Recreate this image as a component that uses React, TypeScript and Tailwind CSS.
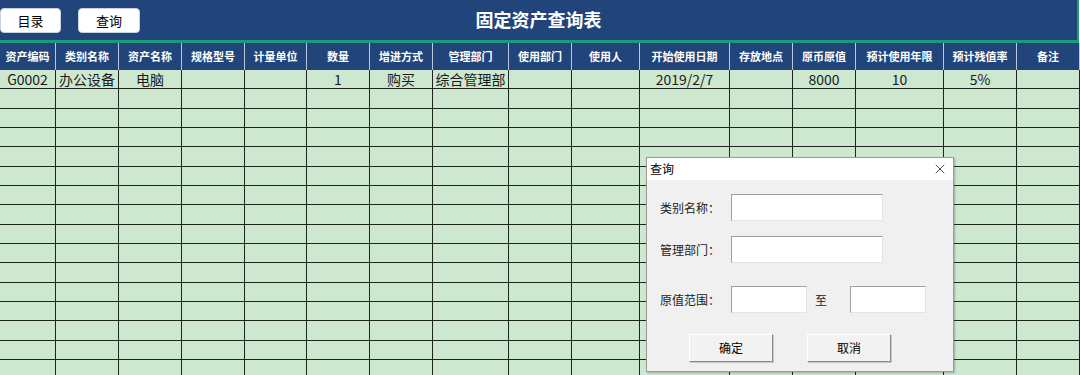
import { X } from "lucide-react";

const columns = [
  "资产编码", "类别名称", "资产名称", "规格型号", "计量单位", "数量", "增进方式", "管理部门",
  "使用部门", "使用人", "开始使用日期", "存放地点", "原币原值", "预计使用年限", "预计残值率", "备注",
];

const firstRow = ["G0002", "办公设备", "电脑", "", "", "1", "购买", "综合管理部", "", "", "2019/2/7", "", "8000", "10", "5%", ""];

const gridCols = "grid grid-cols-[56px_63px_63px_63px_62px_63px_63px_76px_63px_68px_90px_63px_63px_88px_73px_1fr]";

function Field({ label, className = "" }: { label: string; className?: string }) {
  return (
    <div className={`flex flex-row items-center ${className}`}>
      <span className="w-[71px] text-[12px] text-[#222]">{label}</span>
      <div className="w-[152px] h-[27px] bg-white border border-t-[#a0a0a0] border-l-[#a0a0a0] border-r-[#e3e3e3] border-b-[#e3e3e3]" />
    </div>
  );
}

export default function App() {
  const rows = Array.from({ length: 16 }, (_, i) => (i === 0 ? firstRow : columns.map(() => "")));

  return (
    <div className="relative w-[1080px] h-[375px] overflow-hidden bg-white font-['Noto_Sans_CJK_SC','Noto_Sans',sans-serif]">

      {/* Title bar */}
      <div className="w-[1079px] h-[43px] bg-[#21457a] border-b-[3px] border-r-2 border-[#1c9c78] flex flex-row items-center relative">
        <div className="flex flex-row gap-x-[17px] pt-[1px]">
          <button className="w-[61px] h-[25px] bg-white rounded-[4px] border border-[#c9d4e2] text-[13px] text-black">目录</button>
          <button className="w-[62px] h-[25px] bg-white rounded-[4px] border border-[#c9d4e2] text-[13px] text-black">查询</button>
        </div>
        <h1 className="absolute left-0 right-0 top-[6px] text-center text-[18px] font-bold text-white pointer-events-none">固定资产查询表</h1>
      </div>

      {/* Header row */}
      <div className={`${gridCols} h-[27px] bg-[#21457a]`}>
        {columns.map((c, i) => (
          <div key={`head-${i}`} className="flex items-center justify-center border-r border-[#b8c8de] text-[11px] font-bold text-white whitespace-nowrap">
            {c}
          </div>
        ))}
      </div>

      {/* Data rows */}
      {rows.map((row, r) => (
        <div key={`row-${r}`} className={`${gridCols} h-[19.33px] bg-[#cde8cf]`}>
          {row.map((cell, c) => (
            <div key={`cell-${r}-${c}`} className="flex items-center justify-center border-r border-b border-[#1c261e] text-[14px] leading-none text-[#1a1a1a] whitespace-nowrap">
              {cell}
            </div>
          ))}
        </div>
      ))}

      {/* Query dialog */}
      <div className="absolute left-[646px] top-[157px] w-[308px] h-[215px] bg-[#f0f0f0] border border-[#9a9a9a] shadow-[1px_1px_2px_rgba(0,0,0,0.25)] flex flex-col">
        <div className="h-[22px] bg-white flex flex-row items-center justify-between pl-[3px] pr-[5px]">
          <span className="text-[12px] text-black">查询</span>
          <X className="w-[16px] h-[16px] text-[#222]" strokeWidth={1.2} />
        </div>

        <div className="flex flex-col pl-[13px] pt-[14px]">
          <Field label="类别名称：" />
          <Field label="管理部门：" className="mt-[15px]" />

          <div className="flex flex-row items-center mt-[23px]">
            <span className="w-[71px] text-[12px] text-[#222]">原值范围：</span>
            <div className="w-[76px] h-[27px] bg-white border border-t-[#a0a0a0] border-l-[#a0a0a0] border-r-[#e3e3e3] border-b-[#e3e3e3]" />
            <span className="w-[43px] pl-[8px] text-[12px] text-[#222]">至</span>
            <div className="w-[76px] h-[27px] bg-white border border-t-[#a0a0a0] border-l-[#a0a0a0] border-r-[#e3e3e3] border-b-[#e3e3e3]" />
          </div>

          <div className="flex flex-row gap-x-[34px] mt-[21px] pl-[29px]">
            <button className="w-[84px] h-[28px] bg-[#f2f2f2] border border-t-white border-l-white border-r-[#8a8a8a] border-b-[#8a8a8a] shadow-[1px_1px_0_#c8c8c8] text-[12px] text-black">确定</button>
            <button className="w-[84px] h-[28px] bg-[#f2f2f2] border border-t-white border-l-white border-r-[#8a8a8a] border-b-[#8a8a8a] shadow-[1px_1px_0_#c8c8c8] text-[12px] text-black">取消</button>
          </div>
        </div>
      </div>
    </div>
  );
}
